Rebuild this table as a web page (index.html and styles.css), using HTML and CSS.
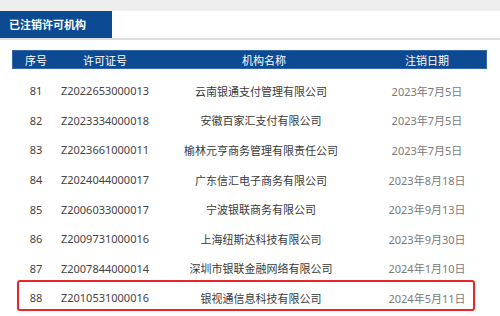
FILE: index.html
```html
<!DOCTYPE html>
<html lang="zh-CN">
<head>
<meta charset="utf-8">
<link rel="stylesheet" href="styles.css">
</head>
<body>
<div class="topband"></div>
<div class="tabbar">
  <div class="tab">已注销许可机构</div>
</div>
<div class="content">
  <div class="table">
    <div class="row head">
      <div>序号</div><div>许可证号</div><div class="hname">机构名称</div><div>注销日期</div>
    </div>
    <div class="body">
      <div class="row"><div>81</div><div>Z2022653000013</div><div class="name">云南银通支付管理有限公司</div><div class="date">2023年7月5日</div></div>
      <div class="row"><div>82</div><div>Z2023334000018</div><div class="name">安徽百家汇支付有限公司</div><div class="date">2023年7月5日</div></div>
      <div class="row"><div>83</div><div>Z2023661000011</div><div class="name">榆林元亨商务管理有限责任公司</div><div class="date">2023年7月5日</div></div>
      <div class="row"><div>84</div><div>Z2024044000017</div><div class="name">广东信汇电子商务有限公司</div><div class="date">2023年8月18日</div></div>
      <div class="row"><div>85</div><div>Z2006033000017</div><div class="name">宁波银联商务有限公司</div><div class="date">2023年9月13日</div></div>
      <div class="row"><div>86</div><div>Z2009731000016</div><div class="name">上海纽斯达科技有限公司</div><div class="date">2023年9月30日</div></div>
      <div class="row"><div>87</div><div>Z2007844000014</div><div class="name">深圳市银联金融网络有限公司</div><div class="date">2024年1月10日</div></div>
      <div class="row marked"><div>88</div><div>Z2010531000016</div><div class="name">银视通信息科技有限公司</div><div class="date">2024年5月11日</div></div>
    </div>
  </div>
</div>
</body>
</html>
```
FILE: styles.css
```css
html, body {
  margin: 0;
  padding: 0;
  background: #ffffff;
}
body {
  font-family: "Noto Sans", "Noto Sans CJK SC", sans-serif;
  font-size: 11px;
  color: #444444;
  width: 500px;
  height: 316px;
  overflow: hidden;
}
.topband {
  height: 11px;
  background: #eeeeee;
}
.tabbar {
  height: 27px;
  background: #ffffff;
  border-bottom: 2px solid #dddddd;
  display: flex;
}
.tab {
  width: 103px;
  padding-left: 9px;
  background: #0c4a94;
  color: #ffffff;
  font-weight: bold;
  font-size: 11px;
  line-height: 27px;
}
.content {
  padding: 10px 13px 0 12px;
}
.row {
  display: grid;
  grid-template-columns: 48px 90px 222px 110px 1fr;
  text-align: center;
  align-items: center;
}
.row.head {
  height: 19px;
  background: #0c4a94;
  color: #ffffff;
  box-shadow: inset 0 0 0 1px #3566a8;
}
.hname {
  padding-left: 6px;
}
.body {
  padding-top: 7px;
}
.body .row {
  height: 29.6px;
}
.date {
  color: #7a7a7a;
}
.name {
  color: #3a3a3a;
}
.marked {
  position: relative;
}
.marked::after {
  content: "";
  position: absolute;
  left: 5px;
  top: -3px;
  width: 454px;
  height: 27px;
  border: 2px solid #e8262a;
  border-radius: 3px;
}
```
